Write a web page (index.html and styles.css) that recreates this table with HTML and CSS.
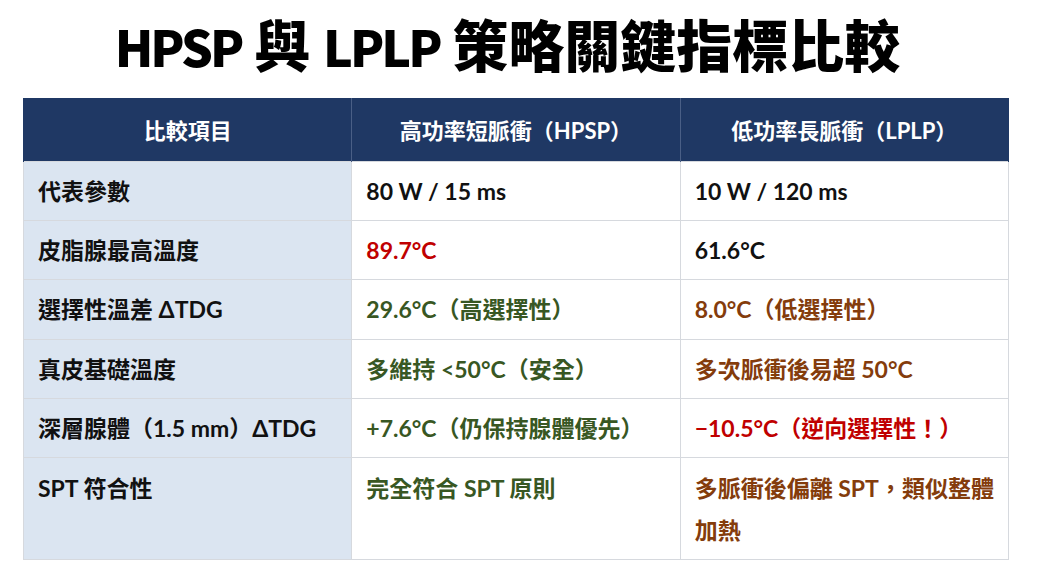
FILE: index.html
```html
<!DOCTYPE html>
<html lang="zh-Hant">
<head>
<meta charset="utf-8">
<title>HPSP 與 LPLP 策略關鍵指標比較</title>
<link rel="stylesheet" href="styles.css">
</head>
<body>
<main class="page">
  <h1 class="title"><span class="lat">HPSP</span> 與 <span class="lat">LPLP</span> 策略關鍵指標比較</h1>
  <table class="cmp">
    <thead>
      <tr>
        <th>比較項目</th>
        <th>高功率短脈衝（HPSP）</th>
        <th>低功率長脈衝（LPLP）</th>
      </tr>
    </thead>
    <tbody>
      <tr>
        <td class="label">代表參數</td>
        <td>80 W / 15 ms</td>
        <td>10 W / 120 ms</td>
      </tr>
      <tr>
        <td class="label">皮脂腺最高溫度</td>
        <td class="red">89.7°C</td>
        <td>61.6°C</td>
      </tr>
      <tr>
        <td class="label">選擇性溫差 ΔTDG</td>
        <td class="green">29.6°C（高選擇性）</td>
        <td class="brown">8.0°C（低選擇性）</td>
      </tr>
      <tr>
        <td class="label">真皮基礎溫度</td>
        <td class="green">多維持 &lt;50°C（安全）</td>
        <td class="brown">多次脈衝後易超 50°C</td>
      </tr>
      <tr>
        <td class="label">深層腺體（1.5 mm）ΔTDG</td>
        <td class="green">+7.6°C（仍保持腺體優先）</td>
        <td class="red">−10.5°C（逆向選擇性！）</td>
      </tr>
      <tr class="tall">
        <td class="label">SPT 符合性</td>
        <td class="green">完全符合 SPT 原則</td>
        <td class="brown">多脈衝後偏離 SPT，類似整體加熱</td>
      </tr>
    </tbody>
  </table>
</main>
</body>
</html>
```

FILE: styles.css
```css
html, body {
  margin: 0;
  padding: 0;
  background: #ffffff;
}

body {
  font-family: "Noto Sans CJK TC", "Noto Sans", sans-serif;
  color: #111111;
}

.page {
  width: 1040px;
  height: 580px;
  padding: 0 0 0 23px;
  box-sizing: border-box;
}

.title {
  margin: 0;
  width: 969px;
  height: 98px;
  line-height: 86px;
  text-align: center;
  font-size: 56px;
  font-weight: 900;
  color: #000000;
}

.title .lat {
  font-size: 50px;
  letter-spacing: -3px;
}

.cmp {
  width: 986px;
  border-collapse: collapse;
  table-layout: fixed;
  font-family: "Lato", "Noto Sans CJK TC", sans-serif;
  font-size: 23px;
  font-weight: 700;
}

.cmp th {
  background: #1f3864;
  color: #ffffff;
  font-size: 22px;
  font-weight: 700;
  height: 63px;
  padding: 0 10px;
  text-align: center;
  vertical-align: middle;
  border-left: 1px solid #4a5f86;
  border-right: 1px solid #4a5f86;
  box-sizing: border-box;
}

.cmp th:first-child { border-left: 1px solid #1f3864; }
.cmp th:last-child { border-right: 1px solid #1f3864; }

.cmp td {
  border: 1px solid #d6d9de;
  padding: 8.2px 14px 8.2px;
  line-height: 42px;
  height: 42px;
  vertical-align: middle;
  text-align: left;
  color: #111111;
}

.cmp tr.tall td {
  vertical-align: top;
  height: 83px;
}

.cmp td.label {
  background: #dbe5f1;
}

.cmp td.red { color: #c00000; }
.cmp td.green { color: #385723; }
.cmp td.brown { color: #843c0c; }
```
